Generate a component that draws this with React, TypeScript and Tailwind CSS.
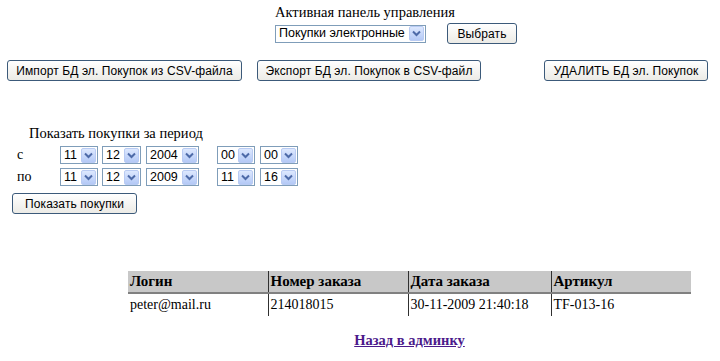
import React from "react";

function Arrow() {
  return (
    <span className="flex h-[15px] w-[15px] shrink-0 items-center justify-center rounded-[2px] border border-[#b9cbf3] bg-gradient-to-b from-[#dde8fe] to-[#b4c9f6]">
      <svg width="9" height="7" viewBox="0 0 9 7">
        <path d="M1 1.5 L4.5 5 L8 1.5" fill="none" stroke="#4d6aa8" strokeWidth="2" />
      </svg>
    </span>
  );
}

function Sel({ value, w }: { value: string; w: string }) {
  return (
    <div className={`flex h-[18px] items-center justify-between border border-[#7f9db9] bg-white pl-[3px] pr-[1px] ${w}`}>
      <span className="whitespace-nowrap text-[12.5px] leading-none text-black">{value}</span>
      <Arrow />
    </div>
  );
}

function Btn({ children, className = "" }: { children: React.ReactNode; className?: string }) {
  return (
    <button className={`flex h-[21px] items-center justify-center whitespace-nowrap rounded-[3px] border border-[#3c5a7a] bg-gradient-to-b from-white to-[#ecebe6] px-[6px] text-[12px] leading-none tracking-[0.1px] text-black ${className}`}>
      {children}
    </button>
  );
}

export default function App() {
  return (
    <div className="h-[361px] w-[720px] overflow-hidden bg-white text-black" style={{ fontFamily: '"Liberation Sans", Arial, sans-serif' }}>
      <div className="flex flex-col pl-[275px] pt-[3px]">
        <div className="font-['Liberation_Serif',serif] text-[14.5px] leading-[18px]">Активная панель управления</div>
        <div className="mt-[2px] flex items-center">
          <Sel value="Покупки электронные" w="w-[151px]" />
          <Btn className="ml-[21px] w-[70px]">Выбрать</Btn>
        </div>
      </div>

      <div className="mt-[16px] flex items-center pl-[7px]">
        <Btn className="w-[235px]">Импорт БД эл. Покупок из CSV-файла</Btn>
        <Btn className="ml-[15px] w-[224px]">Экспорт БД эл. Покупок в CSV-файл</Btn>
        <Btn className="ml-[63px] w-[164px]">УДАЛИТЬ БД эл. Покупок</Btn>
      </div>

      <div className="mt-[43px] pl-[29px] font-['Liberation_Serif',serif] text-[14.5px] leading-[18px]">Показать покупки за период</div>
      <div className="mt-[4px] flex flex-col gap-[4px]">
        {[
          ["с", "11", "12", "2004", "00", "00"],
          ["по", "11", "12", "2009", "11", "16"],
        ].map((r) => (
          <div key={r[0]} className="flex h-[18px] items-center">
            <span className="w-[60px] pl-[17px] font-['Liberation_Serif',serif] text-[14px] leading-none">{r[0]}</span>
            <Sel value={r[1]} w="w-[38px]" />
            <Sel value={r[2]} w="w-[39px] ml-[4px]" />
            <Sel value={r[3]} w="w-[53px] ml-[5px]" />
            <Sel value={r[4]} w="w-[38px] ml-[18px]" />
            <Sel value={r[5]} w="w-[38px] ml-[5px]" />
          </div>
        ))}
      </div>
      <div className="mt-[7px] flex pl-[12px]">
        <Btn className="w-[125px]">Показать покупки</Btn>
      </div>

      <div className="mt-[57px] flex w-[691px] flex-col pl-[128px]">
        <table className="w-[563px] border-collapse font-['Liberation_Serif',serif] text-[14px]">
          <thead>
            <tr className="h-[22px] border-b-2 border-[#808080] bg-[#c8c8c8] text-left">
              <th className="w-[140px] pl-[2px] text-[15px] font-bold leading-none">Логин</th>
              <th className="w-[140px] border-l border-[#303030] pl-[2px] text-[15px] font-bold leading-none">Номер заказа</th>
              <th className="w-[143px] border-l border-[#303030] pl-[2px] text-[15px] font-bold leading-none">Дата заказа</th>
              <th className="border-l border-[#303030] pl-[2px] text-[15px] font-bold leading-none">Артикул</th>
            </tr>
          </thead>
          <tbody>
            <tr className="h-[23px]">
              <td className="pl-[2px] leading-none">peter@mail.ru</td>
              <td className="border-l border-[#303030] pl-[2px] leading-none">214018015</td>
              <td className="border-l border-[#303030] pl-[2px] leading-none">30-11-2009 21:40:18</td>
              <td className="border-l border-[#303030] pl-[2px] leading-none">TF-013-16</td>
            </tr>
          </tbody>
        </table>
        <div className="mt-[15px] flex justify-center">
          <a href="#" className="font-['Liberation_Serif',serif] text-[14.5px] font-bold leading-[18px] text-[#4b1a8b] underline">Назад в админку</a>
        </div>
      </div>
    </div>
  );
}
